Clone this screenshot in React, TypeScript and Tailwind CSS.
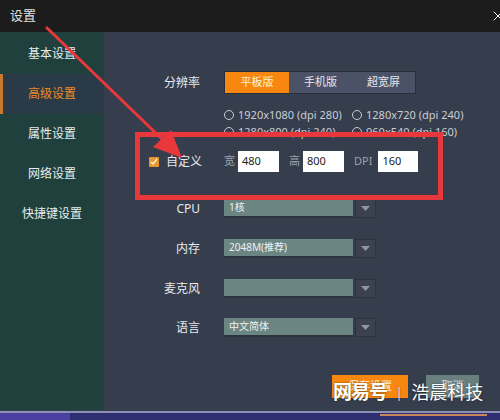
import { X } from "lucide-react";

const menu = ["基本设置", "高级设置", "属性设置", "网络设置", "快捷键设置"];

function Select({ value }: { value: string }) {
  return (
    <div className="flex h-[19px] items-stretch">
      <div className="flex w-[129px] items-center border-b-2 border-[#2d333e] bg-[#6b8582] pl-[5px] text-[10px] text-[#eef2f2]">
        {value}
      </div>
      <div className="ml-[2px] flex w-[21px] items-center justify-center border border-[#2d323c] bg-[#3b414f]">
        <svg width="9" height="5" viewBox="0 0 9 5">
          <polygon points="0,0 9,0 4.5,5" fill="#8e96a3" />
        </svg>
      </div>
    </div>
  );
}

function Radio({ label }: { label: string }) {
  return (
    <div className="flex w-[128px] items-center gap-[4px]">
      <span className="h-[10px] w-[10px] rounded-full border border-[#c9ced6]" />
      <span>{label}</span>
    </div>
  );
}

function Row({ label, children, className }: { label: React.ReactNode; children: React.ReactNode; className?: string }) {
  return (
    <div className={`flex items-center ${className ?? ""}`}>
      <div className="flex w-[96px] items-center justify-end text-[12px] text-[#e6eaee]">{label}</div>
      <div className="ml-[24px]">{children}</div>
    </div>
  );
}

export default function App() {
  return (
    <div
      className="relative h-[420px] w-[500px] overflow-hidden bg-[#363d4c]"
      style={{ fontFamily: '"Noto Sans", "Noto Sans CJK SC", sans-serif' }}
    >
      {/* title bar */}
      <div className="flex h-[32px] items-center justify-between overflow-hidden bg-[#1c1c1c] pl-[10px]">
        <span className="text-[13px] text-[#e2e2e2]">设置</span>
        <X className="-mr-[6px] h-[16px] w-[16px] text-white" strokeWidth={1.5} />
      </div>

      <div className="flex h-[378px]">
        {/* sidebar */}
        <div className="flex w-[104px] flex-col bg-[#20403e] pt-[2px]">
          {menu.map((m, i) => (
            <div
              key={m}
              className={`flex h-[40px] items-center justify-center text-[12px] ${
                i === 1
                  ? "border-l-[3px] border-[#c77a2c] bg-[#2b3a47] pr-[3px] text-[#f08a24]"
                  : "text-[#e8eeee]"
              }`}
            >
              {m}
            </div>
          ))}
        </div>

        {/* main */}
        <div className="flex flex-1 flex-col pt-[39px]">
          <Row label="分辨率">
            <div className="flex h-[23px] border border-[#2a2f3c] bg-[#4b5167] text-[11px] text-[#e4e8f0]">
              <div className="flex w-[64px] items-center justify-center bg-[#f7870f] text-[#fff3e0]">平板版</div>
              <div className="flex w-[63px] items-center justify-center">手机版</div>
              <div className="flex w-[63px] items-center justify-center">超宽屏</div>
            </div>
          </Row>

          <div className="ml-[120px] mt-[15px] flex flex-col gap-[5px] text-[11px] text-[#c9ced6]">
            <div className="flex h-[12px] items-center">
              <Radio label="1920x1080 (dpi 280)" />
              <Radio label="1280x720 (dpi 240)" />
            </div>
            <div className="flex h-[12px] items-center">
              <Radio label="1280x800 (dpi 240)" />
              <Radio label="960x540 (dpi 160)" />
            </div>
          </div>

          <Row
            className="mt-[13px]"
            label={
              <>
                <span className="mr-[7px] flex h-[10px] w-[10px] items-center justify-center rounded-[1px] bg-[#e8962e]">
                  <svg width="8" height="8" viewBox="0 0 8 8">
                    <path d="M1 4 L3 6 L7 1" stroke="#fff6e6" strokeWidth="1.4" fill="none" />
                  </svg>
                </span>
                <span className="-mr-[2px]">自定义</span>
              </>
            }
          >
            <div className="flex items-center text-[11px] text-[#9aa2b0]">
              <span className="mr-[3px]">宽</span>
              <div className="flex h-[21px] w-[41px] items-center bg-white pl-[4px] text-[11px] text-[#222]">480</div>
              <span className="ml-[10px] mr-[3px]">高</span>
              <div className="flex h-[21px] w-[41px] items-center bg-white pl-[4px] text-[11px] text-[#222]">800</div>
              <span className="ml-[10px] mr-[6px]">DPI</span>
              <div className="flex h-[21px] w-[40px] items-center bg-white pl-[4px] text-[11px] text-[#222]">160</div>
            </div>
          </Row>

          <Row className="mt-[27px]" label="CPU">
            <Select value="1核" />
          </Row>
          <Row className="mt-[21px]" label="内存">
            <Select value="2048M(推荐)" />
          </Row>
          <Row className="mt-[21px]" label="麦克风">
            <Select value="" />
          </Row>
          <Row className="mt-[20px]" label="语言">
            <Select value="中文简体" />
          </Row>

          <div className="ml-[228px] mt-[38px] flex gap-[18px] text-[11px]">
            <div className="flex h-[23px] w-[76px] items-center justify-center bg-[#f7870f] text-[#fff0dc]">保存设置</div>
            <div className="flex h-[23px] w-[53px] items-center justify-center bg-[#6a807f] text-[#d6dede]">取消</div>
          </div>
        </div>
      </div>

      {/* taskbar strip at the bottom */}
      <div className="absolute bottom-0 left-0 flex h-[9px] w-[500px] flex-col">
        <div className="h-[2px] bg-[#8b90b4]" />
        <div className="flex flex-1 bg-[#2c2f70]">
          <div className="w-[70px] bg-[#4c3fa2]" />
          <div className="ml-[310px] mt-[1px] h-[2px] w-[107px] bg-[#c9865a]" />
        </div>
      </div>

      {/* red annotation box and arrow */}
      <div className="pointer-events-none absolute left-[135px] top-[132px] h-[68px] w-[308px] border-[5px] border-[#e8383b]" />
      <svg className="pointer-events-none absolute left-0 top-0" width="500" height="420">
        <line x1="46" y1="27" x2="164" y2="141" stroke="#e8383b" strokeWidth="3" />
        <polygon points="182,158 153,147 171,130" fill="#e8383b" />
      </svg>

      {/* watermark */}
      <div
        className="pointer-events-none absolute left-[333px] top-[378px] flex items-center text-white"
        style={{ textShadow: "0 0 2px rgba(0,0,0,0.6)" }}
      >
        <span className="text-[19px] font-bold tracking-[-1px]">网易号</span>
        <span className="mx-[8px] text-[15px] font-light">|</span>
        <span className="text-[18px]">浩晨科技</span>
      </div>
    </div>
  );
}
